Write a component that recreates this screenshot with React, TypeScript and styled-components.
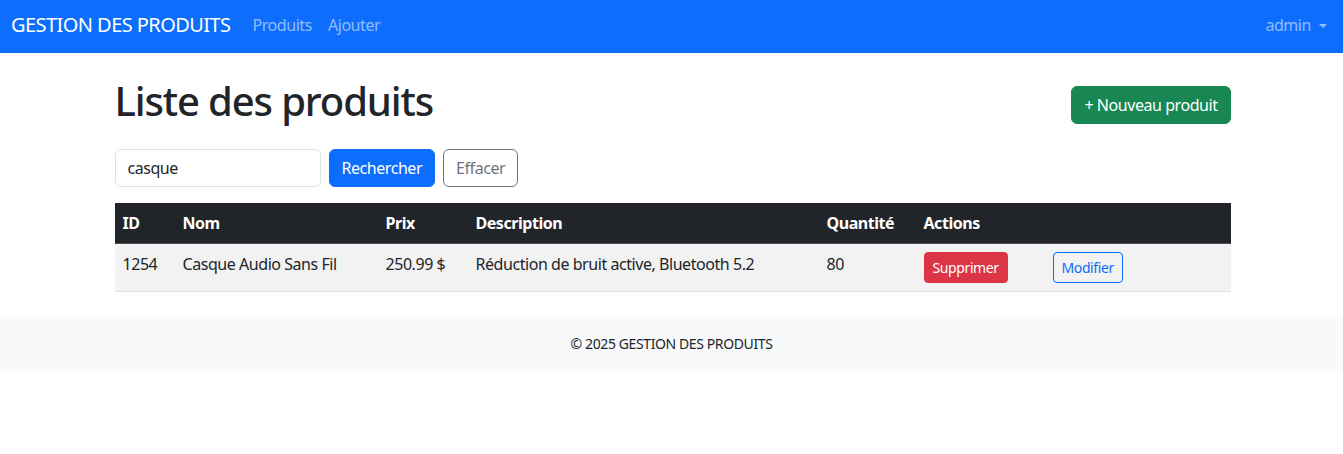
import React from 'react'
import styled, { createGlobalStyle } from 'styled-components'

const GlobalStyle = createGlobalStyle`
    * {
        box-sizing: border-box;
        letter-spacing: -0.028em;
    }
    body {
        margin: 0;
        font-family: "Noto Sans", "Open Sans", sans-serif;
        font-size: 16px;
        line-height: 1.5;
        color: #212529;
        background: #fff;
    }
`

const Navbar = styled.nav`
    display: flex;
    align-items: center;
    height: 53px;
    padding: 0 16px 3px 11px;
    background: #0d6efd;
`
const Brand = styled.a`
    font-size: 20px;
    color: #fff;
    margin-right: 22px;
    text-decoration: none;
`
const NavLinks = styled.div`
    display: flex;
    gap: 16px;
    flex: 1;
`
const NavLink = styled.a`
    color: rgba(255, 255, 255, 0.55);
    font-size: 16px;
    text-decoration: none;
`
const UserMenu = styled.a`
    display: flex;
    align-items: center;
    gap: 8px;
    color: rgba(255, 255, 255, 0.55);
    text-decoration: none;
`
const Caret = styled.span`
    width: 0;
    height: 0;
    border-left: 4.5px solid transparent;
    border-right: 4.5px solid transparent;
    border-top: 4.5px solid rgba(255, 255, 255, 0.55);
    margin-top: 1px;
`

const Container = styled.main`
    width: 1116px;
    margin: 24px auto 24px;
    position: relative;
    left: 1px;
`
const Header = styled.div`
    display: flex;
    align-items: center;
    justify-content: space-between;
    margin-bottom: 16px;
`
const Title = styled.h1`
    font-size: 40px;
    font-weight: 500;
    line-height: 1.2;
    margin: 0 0 8px;
`
const Button = styled.button<{ $variant: 'primary' | 'success' | 'danger' | 'secondary-outline' | 'primary-outline'; $small?: boolean }>`
    font-family: inherit;
    font-size: ${p => (p.$small ? '14px' : '16px')};
    line-height: 1.5;
    padding: ${p => (p.$small ? '4px 8px' : '6px 12px')};
    border-radius: ${p => (p.$small ? '4px' : '6px')};
    border: 1px solid;
    cursor: pointer;
    ${p => {
        switch (p.$variant) {
            case 'primary':
                return 'background: #0d6efd; border-color: #0d6efd; color: #fff;'
            case 'success':
                return 'background: #198754; border-color: #198754; color: #fff;'
            case 'danger':
                return 'background: #dc3545; border-color: #dc3545; color: #fff;'
            case 'secondary-outline':
                return 'background: transparent; border-color: #6c757d; color: #6c757d;'
            case 'primary-outline':
                return 'background: transparent; border-color: #0d6efd; color: #0d6efd;'
        }
    }}
`
const SearchForm = styled.form`
    display: flex;
    gap: 8px;
    margin-bottom: 16px;
`
const Input = styled.input`
    width: 206px;
    height: 38px;
    padding: 6px 12px;
    font-family: inherit;
    font-size: 16px;
    color: #212529;
    border: 1px solid #dee2e6;
    border-radius: 6px;
`

const Table = styled.table`
    width: 100%;
    border-collapse: collapse;
`
const Th = styled.th`
    background: #212529;
    color: #fff;
    text-align: left;
    font-weight: 700;
    padding: 8px;
    vertical-align: top;
    border-bottom: 1px solid #4d5154;
`
const Td = styled.td`
    background: #f2f2f2;
    padding: 8px;
    vertical-align: top;
    border-bottom: 1px solid #dee2e6;
`

const Footer = styled.footer`
    background: #f8f9fa;
    text-align: center;
    padding: 16px 0;
    font-size: 14px;
    line-height: 24px;
`

export default function App() {
    return (
        <>
            <GlobalStyle />
            <Navbar>
                <Brand href="#">GESTION DES PRODUITS</Brand>
                <NavLinks>
                    <NavLink href="#">Produits</NavLink>
                    <NavLink href="#">Ajouter</NavLink>
                </NavLinks>
                <UserMenu href="#">
                    admin <Caret />
                </UserMenu>
            </Navbar>
            <Container>
                <Header>
                    <Title>Liste des produits</Title>
                    <Button $variant="success">+ Nouveau produit</Button>
                </Header>
                <SearchForm onSubmit={e => e.preventDefault()}>
                    <Input defaultValue="casque" />
                    <Button $variant="primary">Rechercher</Button>
                    <Button $variant="secondary-outline" type="button">Effacer</Button>
                </SearchForm>
                <Table>
                    <colgroup>
                        <col style={{ width: 60 }} />
                        <col style={{ width: 203 }} />
                        <col style={{ width: 90 }} />
                        <col style={{ width: 351 }} />
                        <col style={{ width: 97 }} />
                        <col style={{ width: 129 }} />
                        <col />
                    </colgroup>
                    <thead>
                        <tr>
                            <Th>ID</Th>
                            <Th>Nom</Th>
                            <Th>Prix</Th>
                            <Th>Description</Th>
                            <Th>Quantité</Th>
                            <Th colSpan={2}>Actions</Th>
                        </tr>
                    </thead>
                    <tbody>
                        <tr>
                            <Td>1254</Td>
                            <Td>Casque Audio Sans Fil</Td>
                            <Td>250.99 $</Td>
                            <Td>Réduction de bruit active, Bluetooth 5.2</Td>
                            <Td>80</Td>
                            <Td>
                                <Button $variant="danger" $small>Supprimer</Button>
                            </Td>
                            <Td>
                                <Button $variant="primary-outline" $small>Modifier</Button>
                            </Td>
                        </tr>
                    </tbody>
                </Table>
            </Container>
            <Footer>© 2025 GESTION DES PRODUITS</Footer>
        </>
    )
}
